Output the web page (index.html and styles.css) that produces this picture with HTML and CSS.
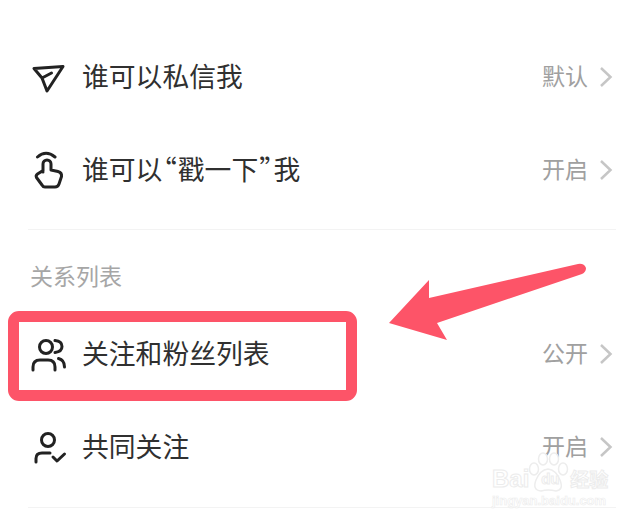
FILE: index.html
```html
<!DOCTYPE html>
<html lang="zh-CN">

<head>
    <meta charset="UTF-8">
    <title>隐私设置</title>
    <link rel="stylesheet" href="styles.css">
</head>

<body>
    <div class="page">
        <div class="section first">
            <div class="label cut">互动</div>
            <div class="row">
                <svg class="icon" viewBox="30 57 40 40">
                    <path d="M34 68.5 L63 66.5 L47 91 L42 78 Z M42 78 L51.5 73" />
                </svg>
                <span class="name">谁可以私信我</span>
                <span class="value">默认</span>
                <svg class="chevron" viewBox="0 0 14 22"><path d="M2 2 L11.500 11 L2 20" /></svg>
            </div>
            <div class="row">
                <svg class="icon" viewBox="30 150 40 40">
                    <path d="M37.500 157 Q46 149.500 55 157" />
                    <path d="M43 172 V164 a4 4 0 0 1 8 0 V170 l7 1.500 q4 1 3.500 5 L59 184 q-1 3 -4 3 H45 q-2 0 -3 -2 L36.500 177.500 q-1 -2 1 -3.500 L43 170.500" />
                </svg>
                <span class="name">谁可以<span class="quote">“</span>戳一下<span class="quote">”</span>我</span>
                <span class="value">开启</span>
                <svg class="chevron" viewBox="0 0 14 22"><path d="M2 2 L11.500 11 L2 20" /></svg>
            </div>
        </div>

        <div class="section">
            <div class="label">关系列表</div>
            <div class="row">
                <svg class="icon" viewBox="30 335 40 40">
                    <circle cx="46" cy="348" r="6.500" />
                    <path d="M55 341.500 Q62 342 62 347.500 Q62 352.500 55 353.500" />
                    <path d="M33 371 V368 Q33 361 40 361 H48 Q55 361 55 368 V371" />
                    <path d="M58.500 359.500 Q64.500 361 64.500 368" />
                </svg>
                <span class="name">关注和粉丝列表</span>
                <span class="value">公开</span>
                <svg class="chevron" viewBox="0 0 14 22"><path d="M2 2 L11.500 11 L2 20" /></svg>
            </div>
            <div class="row">
                <svg class="icon" viewBox="30 428 40 40">
                    <circle cx="48" cy="441" r="6.500" />
                    <path d="M36 463 V459.500 Q36 454 42 454 H50" />
                    <path d="M53 458 L57 462 L64.500 455" />
                </svg>
                <span class="name">共同关注</span>
                <span class="value">开启</span>
                <svg class="chevron" viewBox="0 0 14 22"><path d="M2 2 L11.500 11 L2 20" /></svg>
            </div>
        </div>
    </div>

    <!-- annotation on top of the screenshot -->
    <div class="mark"></div>
    <svg class="arrow" viewBox="0 0 640 522">
        <path d="M389 323 L429 280 L429 298 L578 264 Q584 263 586 268 Q586 272 582 274 L437 323 L447 340 Z" />
    </svg>

    <div class="watermark">
        <svg class="paw" viewBox="0 0 44 50">
            <ellipse cx="8" cy="17" rx="4.500" ry="6" />
            <ellipse cx="17" cy="7" rx="4.500" ry="6" />
            <ellipse cx="28" cy="7" rx="4.500" ry="6" />
            <ellipse cx="37" cy="17" rx="4.500" ry="6" />
            <path d="M22 17 Q14 18 10 28 Q6 38 15 39 Q22 37 30 39 Q38 38 34 28 Q30 18 22 17 Z" />
        </svg>
        <div class="wm-title"><span>Bai</span><span class="wm-du">du</span><span>经验</span></div>
        <div class="wm-url">jingyan.baidu.com</div>
    </div>
</body>

</html>
```

FILE: styles.css
```css
html,
body {
    margin: 0;
    height: 522px;
    overflow: hidden;
    background-color: #fff;
}

body {
    font-family: "Noto Sans CJK SC", "Liberation Sans", sans-serif;
}

.page {
    margin: 0 24px 0 28px;
}

.section {
    border-bottom: 1px solid #f3f3f3;
    padding-bottom: 13px;
}

.section.first {
    padding-bottom: 12px;
}

.label {
    height: 32px;
    padding: 29px 0 17px 2px;
    font-size: 23px;
    line-height: 32px;
    color: #a6a6a6;
}

.label.cut {
    height: 30px;
    margin-top: -29px;
    padding: 0 0 0 2px;
    margin-bottom: 29.500px;
}

.row {
    display: flex;
    align-items: center;
    height: 93px;
    padding-left: 2px;
    padding-right: 3px;
}

.icon {
    width: 40px;
    height: 40px;
    margin-right: 12px;
    fill: none;
    stroke: #222;
    stroke-width: 3;
    stroke-linecap: round;
    stroke-linejoin: round;
}

.name {
    flex: 1;
    margin-bottom: 4px;
    font-size: 26.800px;
    color: #303030;
}

.quote {
    font-feature-settings: "halt";
    padding: 0 1px;
}

.value {
    margin-bottom: 4px;
    margin-right: 11px;
    font-size: 23px;
    color: #a0a0a0;
}

.chevron {
    width: 14px;
    height: 22px;
    fill: none;
    stroke: #c6c6c6;
    stroke-width: 2.500;
}

.mark {
    position: absolute;
    left: 8px;
    top: 311px;
    width: 327px;
    height: 68px;
    border: 11px solid #fd5468;
    border-radius: 11px;
}

.arrow {
    position: absolute;
    left: 0;
    top: 0;
    width: 640px;
    height: 522px;
    fill: #fd5468;
}

.watermark {
    position: absolute;
    left: 492px;
    top: 452px;
    width: 120px;
    color: #fff;
}

.paw {
    position: absolute;
    left: 34px;
    top: 0;
    width: 44px;
    height: 50px;
    fill: #fff;
    stroke: #ededed;
    stroke-width: 1.500;
}

.wm-title {
    position: relative;
    display: flex;
    margin-top: 14px;
    height: 26px;
    font-size: 24px;
    line-height: 26px;
    font-weight: 700;
    -webkit-text-stroke: 1px #ececec;
    font-family: "Liberation Sans", "Noto Sans CJK SC", sans-serif;
}

.wm-title span:last-child {
    font-size: 19px;
    font-family: "Noto Sans CJK SC", sans-serif;
}

.wm-du {
    width: 40px;
    font-size: 15px;
    text-align: center;
    margin-left: 1px;
}

.wm-url {
    position: relative;
    margin-top: 1px;
    font-size: 13px;
    line-height: 16px;
    font-weight: 700;
    -webkit-text-stroke: 0.6px #ececec;
    font-family: "Liberation Sans", sans-serif;
}
```
